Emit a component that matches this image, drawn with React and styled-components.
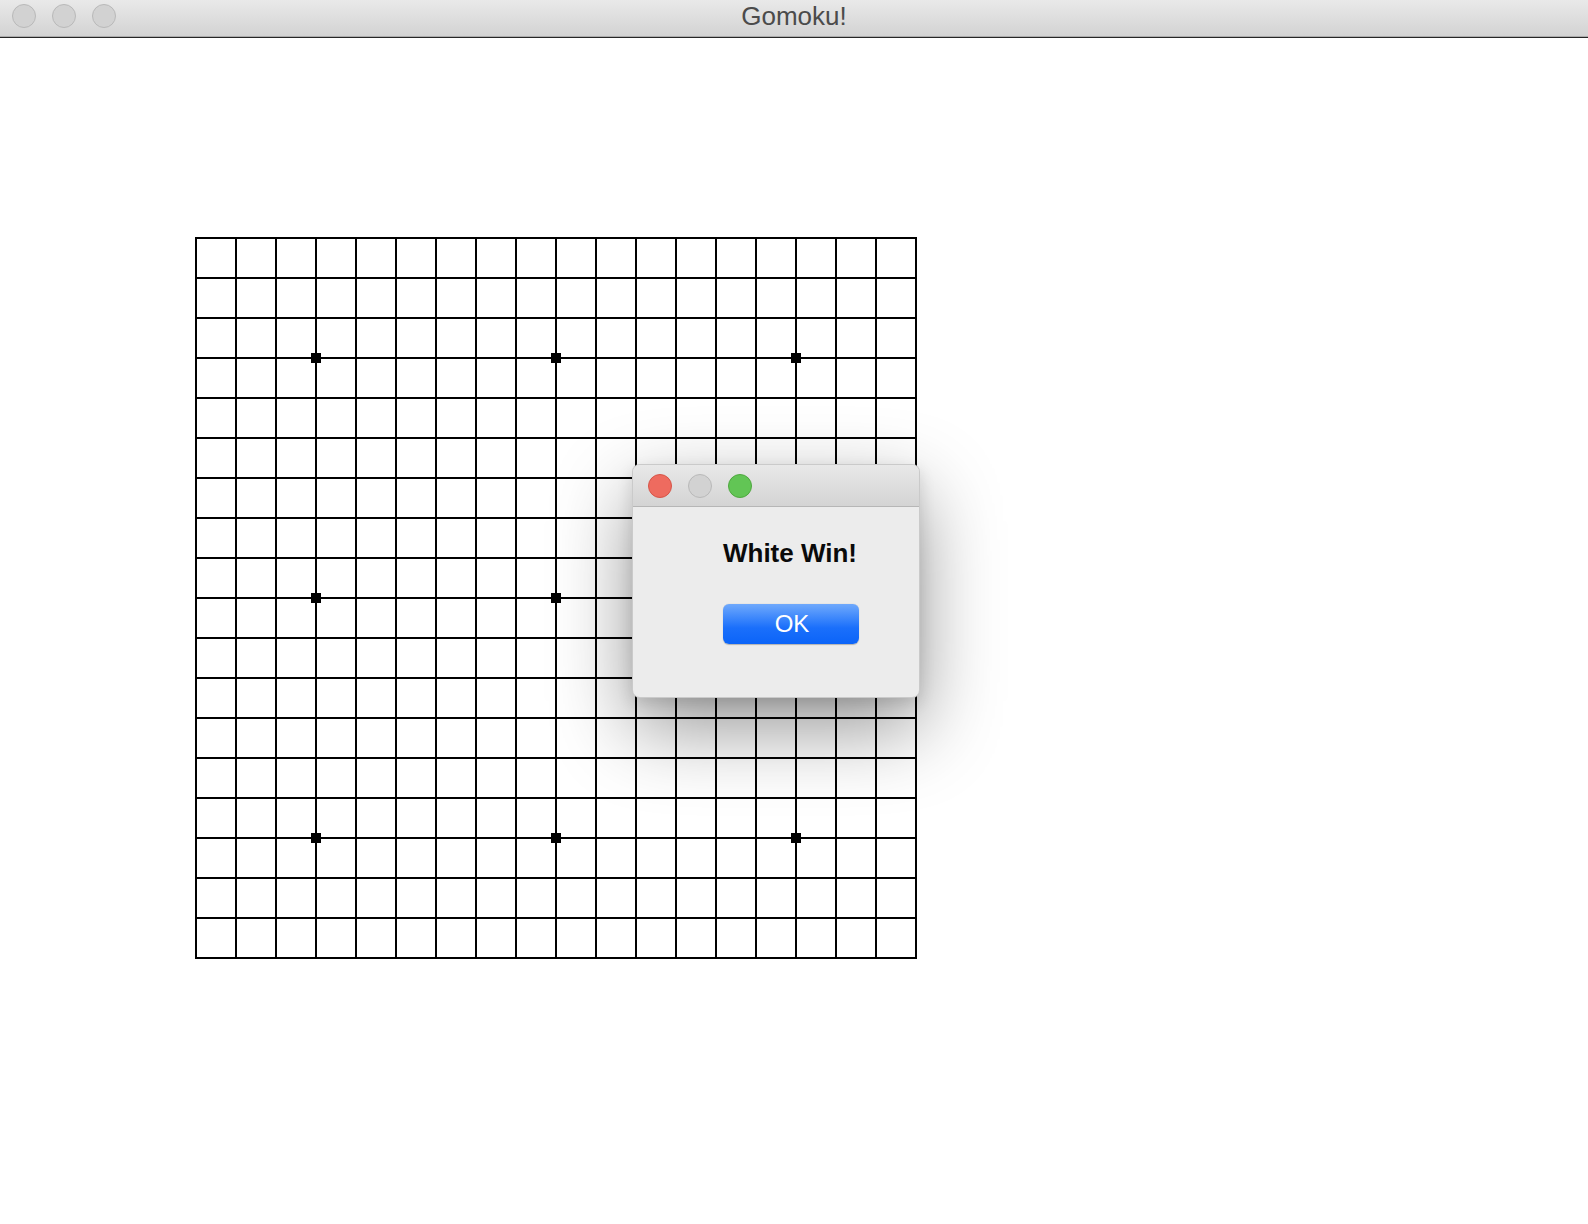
import styled, { createGlobalStyle } from "styled-components";

const SIZE = 18;
const CELL = 40;
const STARS = [3, 9, 15];

const App = () => {
  const lines = Array.from({ length: SIZE + 1 }, (_, i) => i * CELL);

  return (
    <Window>
      <GlobalStyle />
      <TitleBar>
        <Lights>
          <Light />
          <Light />
          <Light />
        </Lights>
        <Title>Gomoku!</Title>
      </TitleBar>

      <Content>
        <Board width={SIZE * CELL + 2} height={SIZE * CELL + 2}>
          {lines.map((p) => (
            <rect key={"v" + p} x={p} y={0} width={2} height={SIZE * CELL + 2} />
          ))}
          {lines.map((p) => (
            <rect key={"h" + p} x={0} y={p} width={SIZE * CELL + 2} height={2} />
          ))}
          {STARS.map((r) =>
            STARS.map((c) => (
              <rect key={r + "-" + c} x={c * CELL - 4} y={r * CELL - 4} width={10} height={10} />
            ))
          )}
        </Board>
      </Content>

      <Dialog>
        <DialogBar>
          <Light $color="#ee6b5f" $border="#d65548" />
          <Light />
          <Light $color="#62c555" $border="#4fa83f" />
        </DialogBar>
        <DialogBody>
          <Message>White Win!</Message>
          <OkButton>OK</OkButton>
        </DialogBody>
      </Dialog>
    </Window>
  );
};

export default App;

/* ---------------------------- Styled Components --------------------------- */

const GlobalStyle = createGlobalStyle`
  html, body {
    margin: 0;
    padding: 0;
    background: #fff;
  }
  body {
    font-family: "Liberation Sans", Arial, sans-serif;
  }
`;

const Window = styled.div`
  position: relative;
  width: 1588px;
  height: 1224px;
  background: #fff;
  overflow: hidden;
`;

const TitleBar = styled.div`
  position: relative;
  height: 36px;
  display: flex;
  align-items: center;
  justify-content: center;
  background: linear-gradient(#e9e9e9, #d3d3d3);
  border-bottom: 1px solid #ababab;
  box-shadow: 0 1px 0 #262626;
  margin-bottom: 1px;
`;

const Lights = styled.div`
  position: absolute;
  left: 12px;
  top: 4px;
  display: flex;
  gap: 16px;
`;

const Light = styled.span`
  width: 22px;
  height: 22px;
  border-radius: 50%;
  background: ${(p) => p.$color || "#d2d2d2"};
  border: 1px solid ${(p) => p.$border || "#b9b9b9"};
`;

const Title = styled.div`
  font-size: 26px;
  line-height: 30px;
  color: #4b4b4b;
  padding-bottom: 4px;
`;

const Content = styled.div`
  padding: 199px 0 0 195px;
`;

const Board = styled.svg`
  display: block;
  fill: #000;
`;

/* --------------------------------- Dialog --------------------------------- */

const Dialog = styled.div`
  position: absolute;
  left: 632px;
  top: 464px;
  width: 288px;
  height: 234px;
  box-sizing: border-box;
  border-radius: 8px;
  background: #ececec;
  border: 1px solid rgba(0, 0, 0, 0.14);
  box-shadow: 0 30px 80px rgba(0, 0, 0, 0.42), 0 6px 16px rgba(0, 0, 0, 0.12);
  overflow: hidden;
  display: flex;
  flex-direction: column;
`;

const DialogBar = styled.div`
  height: 42px;
  box-sizing: border-box;
  display: flex;
  align-items: center;
  gap: 16px;
  padding-left: 15px;
  background: linear-gradient(#e8e8e8, #d4d4d4);
  border-bottom: 1px solid #b6b6b6;
`;

const DialogBody = styled.div`
  flex: 1;
  display: flex;
  flex-direction: column;
  align-items: center;
  padding: 31px 28px 0 58px;
`;

const Message = styled.div`
  font-size: 26px;
  line-height: 30px;
  font-weight: 700;
  color: #0a0a0a;
  margin-right: 2px;
`;

const OkButton = styled.button`
  margin-top: 36px;
  width: 136px;
  height: 40px;
  border: none;
  border-radius: 6px;
  background: linear-gradient(#6fa9fc, #1a6ffb 60%, #0b64f8);
  box-shadow: 0 0.5px 1px rgba(0, 0, 0, 0.25);
  color: #fff;
  font-family: "Liberation Sans", Arial, sans-serif;
  font-size: 24px;
  line-height: 40px;
  padding: 0;
  padding-left: 2px;
`;
